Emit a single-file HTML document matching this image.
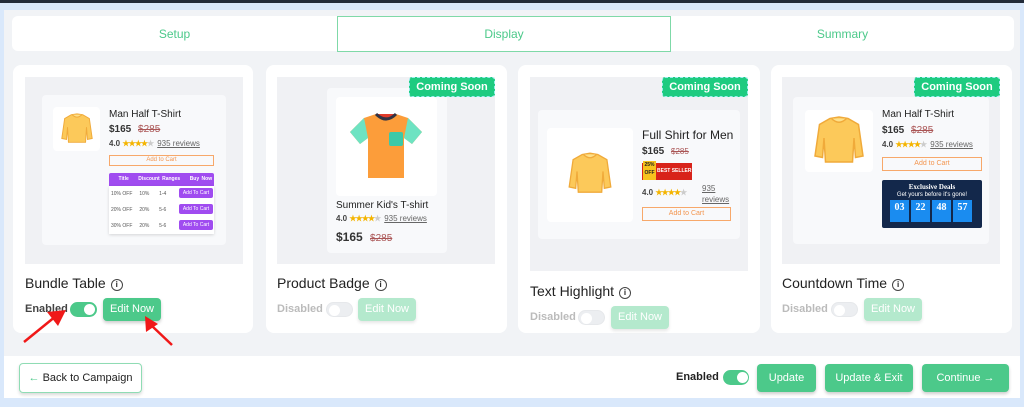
<!DOCTYPE html>
<html><head><meta charset="utf-8"><style>
*{box-sizing:border-box;margin:0;padding:0}
body{width:1024px;height:407px;overflow:hidden;background:#d9e8fb;font-family:"Liberation Sans",sans-serif;position:relative;color:#222}
.a{position:absolute}
.panel{left:4px;top:10px;width:1016px;height:346px;background:#f1f3f6}
.tabs{left:12px;top:16px;width:1002px;height:35px;background:#fff;border-radius:6px}
.tab{top:16px;height:36px;line-height:36px;text-align:center;color:#4cc98a;font-size:12px}
.card{background:#fff;border-radius:8px}
.prev{background:#f0f1f4}
.in{background:#f8f9fb;border-radius:4px}
.title{font-size:14px;color:#222}
.info{display:inline-block;width:12px;height:12px;border:1px solid #444;border-radius:50%;font-size:8px;line-height:10px;text-align:center;vertical-align:1px;margin-left:5px;font-weight:bold}
.lab{font-size:11px;color:#bbb;font-weight:bold}
.tog{width:27px;height:15px;border-radius:8px;background:#eceef1}
.tog:after{content:"";position:absolute;left:2px;top:2px;width:11px;height:11px;border-radius:50%;background:#fff}
.tog.on{background:#4cc98a}
.tog.on:after{left:14px}
.btn{background:#4cc98a;color:#fff;border-radius:4px;text-align:center;font-size:11px;box-shadow:0 2px 3px rgba(0,0,0,.2)}
.btn.dis{background:#b4e9cd;box-shadow:0 2px 3px rgba(0,0,0,.1)}
.cs{background:#1ecb80;color:#fff;font-weight:bold;font-size:11px;border:1px dashed #9ee;border-radius:3px;text-align:center}
.pn{font-size:10px;color:#222}
.pr{font-size:10px;font-weight:bold;color:#333}
.pr s{font-weight:normal;margin-left:4px;color:#a55}
.st{font-size:8px;color:#444;font-weight:bold}
.st b{color:#f4b400;letter-spacing:-1px}
.st u{font-weight:normal;color:#666;margin-left:3px}
.atc{border:1px solid #f7a86a;color:#f39650;font-size:6px;text-align:center}
</style></head><body>
<div class="a" style="left:0;top:0;width:1024px;height:3px;background:#222b3a"></div>
<div class="a panel"></div>
<div class="a tabs"></div>
<div class="a tab" style="left:12px;width:325px">Setup</div>
<div class="a tab" style="left:337px;width:334px;border:1px solid #7fd9a8;line-height:34px">Display</div>
<div class="a tab" style="left:671px;width:343px">Summary</div>

<!-- card 1 -->
<div class="a card" style="left:13px;top:65px;width:240px;height:268px"></div>
<div class="a prev" style="left:25px;top:77px;width:218px;height:187px"></div>
<div class="a in" style="left:42px;top:95px;width:184px;height:150px"></div>
<div class="a" style="left:53px;top:107px;width:47px;height:44px;background:#fff;border-radius:4px"></div>
<svg class="a" style="left:58px;top:110px" width="38" height="38" viewBox="0 0 40 40"><path d="M14 5 L20 4 L26 5 L33 9 L36 30 L31 31 L30 18 L29 34 L11 34 L10 18 L9 31 L4 30 L7 9 Z" fill="#fcc95a" stroke="#f0aa3a" stroke-width="1"/><path d="M15 5 Q20 10 25 5" fill="#fde08a" stroke="#f0aa3a"/></svg>
<div class="a pn" style="left:109px;top:109px;font-size:10px">Man Half T-Shirt</div>
<div class="a pr" style="left:109px;top:124px">$165 <s>$285</s></div>
<div class="a st" style="left:109px;top:139px">4.0 <b>★★★★</b><span style="color:#ccc">★</span><u>935 reviews</u></div>
<div class="a atc" style="left:109px;top:155px;width:105px;height:11px;line-height:9px">Add to Cart</div>
<div class="a" style="left:109px;top:173px;width:105px;height:13px;background:#a04cf0;border-radius:2px 2px 0 0;color:#fff;font-size:5px;line-height:13px;font-weight:bold;word-spacing:1px">&nbsp;&nbsp;&nbsp;&nbsp;Title&nbsp;&nbsp;&nbsp;&nbsp;Discount Ranges&nbsp;&nbsp;&nbsp;&nbsp;Buy Now</div>
<div class="a" style="left:109px;top:186px;width:105px;height:48px;background:#fff;box-shadow:0 1px 3px rgba(0,0,0,.15);font-size:5px;color:#555">
<div style="position:absolute;left:2px;top:5px">10% OFF&nbsp;&nbsp;&nbsp;&nbsp;&nbsp;10%&nbsp;&nbsp;&nbsp;&nbsp;&nbsp;&nbsp;&nbsp;1-4</div>
<div style="position:absolute;left:2px;top:21px">20% OFF&nbsp;&nbsp;&nbsp;&nbsp;&nbsp;20%&nbsp;&nbsp;&nbsp;&nbsp;&nbsp;&nbsp;&nbsp;5-6</div>
<div style="position:absolute;left:2px;top:37px">30% OFF&nbsp;&nbsp;&nbsp;&nbsp;&nbsp;20%&nbsp;&nbsp;&nbsp;&nbsp;&nbsp;&nbsp;&nbsp;5-6</div>
<div style="position:absolute;left:70px;top:2px;width:34px;height:10px;background:#a04cf0;color:#fff;border-radius:2px;text-align:center;line-height:10px">Add To Cart</div>
<div style="position:absolute;left:70px;top:18px;width:34px;height:10px;background:#a04cf0;color:#fff;border-radius:2px;text-align:center;line-height:10px">Add To Cart</div>
<div style="position:absolute;left:70px;top:34px;width:34px;height:10px;background:#a04cf0;color:#fff;border-radius:2px;text-align:center;line-height:10px">Add To Cart</div>
</div>
<div class="a title" style="left:25px;top:275px">Bundle Table<span class="info">i</span></div>
<div class="a lab" style="left:25px;top:303px;color:#444">Enabled</div>
<div class="a tog on" style="left:70px;top:302px"></div>
<div class="a btn" style="left:103px;top:298px;width:58px;height:23px;line-height:23px">Edit Now</div>
<svg class="a" style="left:0;top:300px" width="200" height="60"><path d="M56 16 L24 42" stroke="#f01818" stroke-width="2.5"/><path d="M47 12 L66 10 L58 26 Z" fill="#f01818"/><path d="M152 26 L172 45" stroke="#f01818" stroke-width="2.5"/><path d="M145 16 L146 32 L158 24 Z" fill="#f01818"/></svg>

<!-- card 2 -->
<div class="a card" style="left:266px;top:65px;width:241px;height:268px"></div>
<div class="a prev" style="left:277px;top:77px;width:218px;height:187px"></div>
<div class="a in" style="left:327px;top:88px;width:120px;height:165px"></div>
<div class="a" style="left:336px;top:97px;width:101px;height:99px;background:#fff;border-radius:4px"></div>
<svg class="a" style="left:346px;top:110px" width="80" height="72" viewBox="0 0 80 72"><path d="M18 8 L30 4 L50 4 L62 8 L76 22 L66 34 L58 28 L58 68 L22 68 L22 28 L14 34 L4 22 Z" fill="#fc9d3a"/><path d="M18 8 L4 22 L14 34 L22 28 Z M62 8 L76 22 L66 34 L58 28 Z" fill="#6ee3c2"/><path d="M30 4 Q40 14 50 4" fill="#e03a2a" stroke="#334" stroke-width="3"/><rect x="43" y="22" width="14" height="14" rx="2" fill="#3cc9a8"/></svg>
<div class="a pn" style="left:336px;top:200px;font-size:10px">Summer Kid's T-shirt</div>
<div class="a st" style="left:336px;top:214px">4.0 <b>★★★★</b><span style="color:#ccc">★</span><u>935 reviews</u></div>
<div class="a pr" style="left:336px;top:230px;font-size:12px">$165 <s style="font-size:10px">$285</s></div>
<div class="a cs" style="left:409px;top:77px;width:86px;height:20px;line-height:18px">Coming Soon</div>
<div class="a title" style="left:277px;top:275px">Product Badge<span class="info">i</span></div>
<div class="a lab" style="left:277px;top:303px">Disabled</div>
<div class="a tog" style="left:326px;top:302px;border:1px solid #e6e8eb"></div>
<div class="a btn dis" style="left:358px;top:298px;width:58px;height:23px;line-height:23px">Edit Now</div>

<!-- card 3 -->
<div class="a card" style="left:518px;top:65px;width:242px;height:268px"></div>
<div class="a prev" style="left:530px;top:77px;width:218px;height:194px"></div>
<div class="a in" style="left:538px;top:110px;width:202px;height:129px"></div>
<div class="a" style="left:547px;top:128px;width:86px;height:94px;background:#fff;border-radius:4px"></div>
<svg class="a" style="left:563px;top:148px" width="54" height="52" viewBox="0 0 40 40"><path d="M14 5 L20 4 L26 5 L33 9 L36 30 L31 31 L30 18 L29 34 L11 34 L10 18 L9 31 L4 30 L7 9 Z" fill="#fcc95a" stroke="#f0aa3a" stroke-width="1"/><path d="M15 5 Q20 10 25 5" fill="#fde08a" stroke="#f0aa3a"/></svg>
<div class="a pn" style="left:642px;top:128px;font-size:12px">Full Shirt for Men</div>
<div class="a pr" style="left:642px;top:146px">$165 <s style="font-size:8px">$285</s></div>
<div class="a" style="left:642px;top:163px;width:50px;height:17px;background:#d8231a;color:#fff;font-size:5px;font-weight:bold;line-height:17px;padding-left:15px;white-space:nowrap;overflow:hidden">BEST SELLER</div>
<div class="a" style="left:643px;top:161px;width:13px;height:19px;background:#f7c31e;font-size:5px;font-weight:bold;line-height:8px;text-align:center;color:#222">25%<br>OFF</div>
<div class="a st" style="left:642px;top:188px">4.0 <b>★★★★</b><span style="color:#ccc">★</span></div>
<div class="a st" style="left:702px;top:183px;line-height:11px"><u style="margin:0">935<br>reviews</u></div>
<div class="a atc" style="left:642px;top:207px;width:89px;height:14px;line-height:12px;font-size:7px">Add to Cart</div>
<div class="a cs" style="left:662px;top:77px;width:86px;height:20px;line-height:18px">Coming Soon</div>
<div class="a title" style="left:530px;top:283px">Text Highlight<span class="info">i</span></div>
<div class="a lab" style="left:530px;top:311px">Disabled</div>
<div class="a tog" style="left:578px;top:310px;border:1px solid #e6e8eb"></div>
<div class="a btn dis" style="left:611px;top:306px;width:58px;height:23px;line-height:23px">Edit Now</div>

<!-- card 4 -->
<div class="a card" style="left:771px;top:65px;width:241px;height:268px"></div>
<div class="a prev" style="left:782px;top:77px;width:218px;height:187px"></div>
<div class="a in" style="left:793px;top:97px;width:196px;height:147px"></div>
<div class="a" style="left:805px;top:110px;width:68px;height:62px;background:#fff;border-radius:4px"></div>
<svg class="a" style="left:808px;top:111px" width="62" height="60" viewBox="0 0 40 40"><path d="M14 5 L20 4 L26 5 L33 9 L36 30 L31 31 L30 18 L29 34 L11 34 L10 18 L9 31 L4 30 L7 9 Z" fill="#fcc95a" stroke="#f0aa3a" stroke-width="1"/><path d="M15 5 Q20 10 25 5" fill="#fde08a" stroke="#f0aa3a"/></svg>
<div class="a pn" style="left:882px;top:109px">Man Half T-Shirt</div>
<div class="a pr" style="left:882px;top:125px">$165 <s>$285</s></div>
<div class="a st" style="left:882px;top:140px">4.0 <b>★★★★</b><span style="color:#ccc">★</span><u>935 reviews</u></div>
<div class="a atc" style="left:882px;top:157px;width:100px;height:14px;line-height:12px;font-size:7px">Add to Cart</div>
<div class="a" style="left:882px;top:180px;width:100px;height:48px;background:#13284b;border-radius:2px;color:#fff;text-align:center">
<div style="font-family:'Liberation Serif',serif;font-size:7px;font-weight:bold;margin-top:3px">Exclusive Deals</div>
<div style="font-size:6px;margin-top:1px">Get yours before it's gone!</div>
<div style="display:flex;gap:2px;margin:2px 0 0 8px">
<div style="width:19px;height:22px;background:#1a8cf0;font:bold 10px 'Liberation Serif',serif;line-height:16px">03</div>
<div style="width:19px;height:22px;background:#1a8cf0;font:bold 10px 'Liberation Serif',serif;line-height:16px">22</div>
<div style="width:19px;height:22px;background:#1a8cf0;font:bold 10px 'Liberation Serif',serif;line-height:16px">48</div>
<div style="width:19px;height:22px;background:#1a8cf0;font:bold 10px 'Liberation Serif',serif;line-height:16px">57</div>
</div></div>
<div class="a cs" style="left:914px;top:77px;width:86px;height:20px;line-height:18px">Coming Soon</div>
<div class="a title" style="left:782px;top:275px">Countdown Time<span class="info">i</span></div>
<div class="a lab" style="left:782px;top:303px">Disabled</div>
<div class="a tog" style="left:831px;top:302px;border:1px solid #e6e8eb"></div>
<div class="a btn dis" style="left:864px;top:298px;width:58px;height:23px;line-height:23px">Edit Now</div>

<!-- footer -->
<div class="a" style="left:4px;top:356px;width:1016px;height:42px;background:#fff"></div>
<div class="a" style="left:19px;top:363px;width:123px;height:30px;border:1px solid #8fdcb4;border-radius:4px;font-size:11px;line-height:28px;text-align:center;color:#222;box-shadow:0 2px 3px rgba(0,0,0,.15)"><span style="color:#4cc98a">←</span> Back to Campaign</div>
<div class="a" style="left:676px;top:371px;font-size:11px;font-weight:bold;color:#222">Enabled</div>
<div class="a tog on" style="left:723px;top:370px;width:26px;height:15px"></div>
<div class="a btn" style="left:757px;top:364px;width:59px;height:28px;line-height:28px;font-size:11px">Update</div>
<div class="a btn" style="left:825px;top:364px;width:88px;height:28px;line-height:28px;font-size:11px">Update &amp; Exit</div>
<div class="a btn" style="left:922px;top:364px;width:87px;height:28px;line-height:28px;font-size:11px">Continue →</div>
</body></html>
